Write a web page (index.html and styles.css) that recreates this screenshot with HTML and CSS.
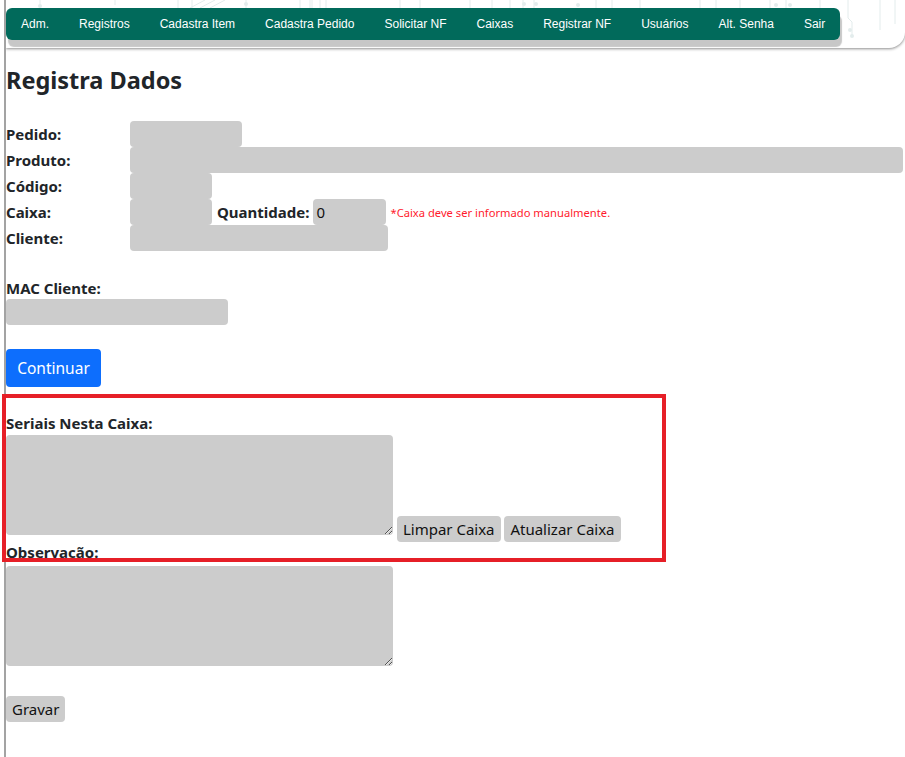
FILE: index.html
```html
<!DOCTYPE html>
<html lang="pt-BR">
<head>
<meta charset="utf-8">
<title>Registra Dados</title>
<link rel="stylesheet" href="styles.css">
</head>
<body>
<header class="top">
  <svg class="circuit" width="905" height="48" viewBox="0 0 905 48" aria-hidden="true">
    <g fill="none" stroke="#e3ecec" stroke-width="1">
      <path d="M40 0 V6"/><path d="M115 0 V5"/><path d="M190 8 L205 0"/><path d="M200 8 L215 0"/><path d="M210 8 L225 0"/>
      <path d="M300 0 V8"/><path d="M310 0 V8"/><path d="M320 0 V8"/>
      <path d="M178 0 V8"/><path d="M192 0 V8"/><path d="M246 0 V8"/>
      <path d="M312 0 V8"/><path d="M326 0 V8"/><path d="M400 0 V8"/><path d="M420 0 V8"/>
      <path d="M470 0 V8"/><path d="M492 0 V8"/><path d="M510 0 V8"/>
      <path d="M523 0 V8"/><path d="M534 0 V8"/><path d="M596 0 V8"/><path d="M612 0 V8"/>
      <path d="M640 0 V8"/><path d="M700 0 V8"/><path d="M716 0 V8"/><path d="M740 0 V8"/>
      <path d="M770 0 V8"/><path d="M786 0 V8"/><path d="M820 0 V8"/>
      <path d="M848 0 V18 L852 22 V36"/><path d="M880 0 V30"/><path d="M895 0 V24"/>
    </g>
    <g fill="#e3ecec">
      <circle cx="40" cy="6" r="2"/><circle cx="246" cy="4" r="2"/><circle cx="524" cy="4" r="2"/>
      <circle cx="536" cy="4" r="2"/><circle cx="578" cy="5" r="2"/><circle cx="776" cy="5" r="2"/>
      <circle cx="790" cy="5" r="2"/><circle cx="850" cy="30" r="2"/><circle cx="852" cy="36" r="2"/>
    </g>
  </svg>
  <nav class="menu">
    <a href="#">Adm.</a>
    <a href="#">Registros</a>
    <a href="#">Cadastra Item</a>
    <a href="#">Cadastra Pedido</a>
    <a href="#">Solicitar NF</a>
    <a href="#">Caixas</a>
    <a href="#">Registrar NF</a>
    <a href="#">Usuários</a>
    <a href="#">Alt. Senha</a>
    <a href="#">Sair</a>
  </nav>
</header>

<main class="content">
  <h1 class="title">Registra Dados</h1>

  <div class="grid">
    <label class="lbl">Pedido:</label>
    <div class="field"><input class="inp w-pedido" type="text"></div>

    <label class="lbl">Produto:</label>
    <div class="field"><input class="inp w-produto" type="text"></div>

    <label class="lbl">Código:</label>
    <div class="field"><input class="inp w-codigo" type="text"></div>

    <label class="lbl">Caixa:</label>
    <div class="field">
      <input class="inp w-codigo" type="text">
      <label class="lbl qty-lbl">Quantidade:</label>
      <input class="inp w-qty" type="text" value="0">
      <span class="warn">*Caixa deve ser informado manualmente.</span>
    </div>

    <label class="lbl">Cliente:</label>
    <div class="field"><input class="inp w-cliente" type="text"></div>
  </div>

  <div class="block mac">
    <label class="lbl">MAC Cliente:</label>
    <input class="inp w-mac" type="text">
  </div>

  <button class="btn-primary" type="button">Continuar</button>

  <div class="block seriais">
    <label class="lbl">Seriais Nesta Caixa:</label>
    <div class="line"><textarea class="area"></textarea> <button class="btn-gray" type="button">Limpar Caixa</button> <button class="btn-gray" type="button">Atualizar Caixa</button></div>
  </div>

  <div class="block obs">
    <label class="lbl">Observação:</label>
    <div class="line"><textarea class="area"></textarea></div>
  </div>

  <button class="btn-gray gravar" type="button">Gravar</button>
</main>

<div class="highlight" aria-hidden="true"></div>
</body>
</html>
```

FILE: styles.css
```css
html, body {
  margin: 0;
  padding: 0;
}

body {
  margin-left: 4px;
  border-left: 2px solid #a3a3a3;
  min-height: 757px;
  box-sizing: border-box;
  background: #fff;
  font-family: "Noto Sans", "Open Sans", sans-serif;
  color: #212529;
  overflow: hidden;
}

.top {
  position: relative;
  height: 48px;
  background: #fff;
  border-bottom-right-radius: 16px;
  box-shadow: 0 1px 3px rgba(0, 0, 0, 0.45);
  padding-top: 8px;
  box-sizing: border-box;
}

.circuit {
  position: absolute;
  left: -6px;
  top: 0;
}

.menu {
  position: relative;
  display: flex;
  align-items: center;
  width: 834px;
  height: 32px;
  background: #016a5b;
  border-radius: 6px;
  box-shadow: 2px 7px 1px #c7c7c7;
}

.menu a {
  padding: 0 15px;
  font-family: "Liberation Sans", Arial, sans-serif;
  font-size: 12px;
  color: #fff;
  text-decoration: none;
  white-space: nowrap;
}

.content {
  padding: 0;
}

.title {
  margin: 17px 0 0;
  font-size: 23.5px;
  font-weight: 700;
  line-height: 30px;
  color: #212529;
}

.grid {
  display: grid;
  grid-template-columns: 124px 1fr;
  grid-auto-rows: 26px;
  margin-top: 26px;
}

.lbl {
  display: flex;
  align-items: center;
  font-size: 15px;
  font-weight: 700;
  color: #212529;
}

.field {
  display: flex;
  align-items: center;
}

.inp {
  height: 26px;
  box-sizing: border-box;
  border: none;
  border-radius: 4px;
  background: #cccccc;
  padding: 0 3px;
  font-family: "Noto Sans", sans-serif;
  font-size: 15px;
  color: #111;
  outline: none;
}

.w-pedido { width: 112px; }
.w-produto { width: 773px; }
.w-codigo { width: 82px; }
.w-qty { width: 73px; }
.w-cliente { width: 258px; }
.w-mac { width: 222px; }

.qty-lbl {
  height: 26px;
  padding: 0 4px 0 5px;
}

.warn {
  margin-left: 4px;
  font-size: 11.2px;
  color: #ff1a2d;
}

.block {
  display: flex;
  flex-direction: column;
  align-items: flex-start;
}

.block .lbl {
  height: 20px;
}

.mac {
  margin-top: 27px;
}

.mac .lbl {
  margin-bottom: 1px;
}

.btn-primary {
  display: block;
  margin-top: 24px;
  width: 95px;
  height: 38px;
  border: none;
  border-radius: 4px;
  background: #0d6efd;
  color: #fff;
  font-family: "Noto Sans", sans-serif;
  font-size: 15.5px;
  padding: 0;
}

.seriais {
  margin-top: 26px;
}

.seriais .lbl {
  margin-bottom: 2px;
}

.line {
  font-size: 15px;
  line-height: 20px;
  white-space: nowrap;
}

.area {
  width: 387px;
  height: 100px;
  box-sizing: border-box;
  border: none;
  border-radius: 4px;
  background: #cccccc;
  vertical-align: baseline;
  margin: 0;
  padding: 2px;
  font-family: "Noto Sans", sans-serif;
}

.btn-gray {
  height: 26px;
  border: none;
  border-radius: 4px;
  background: #cccccc;
  color: #111;
  font-family: "Noto Sans", sans-serif;
  font-size: 15px;
  padding: 0 6px;
  margin: 0;
  vertical-align: baseline;
}

.obs {
  margin-top: 0;
}

.obs .lbl {
  margin-bottom: 4px;
}

.gravar {
  display: block;
  margin-top: 26px;
}

.highlight {
  position: absolute;
  left: 2px;
  top: 394px;
  width: 664px;
  height: 168px;
  box-sizing: border-box;
  border: 4px solid #e61f27;
  pointer-events: none;
}
```
